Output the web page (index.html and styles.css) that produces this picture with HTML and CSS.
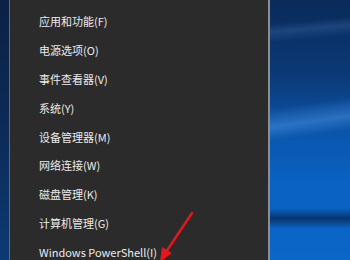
FILE: index.html
```html
<!DOCTYPE html>
<html lang="zh-CN">
<head>
  <meta charset="UTF-8" />
  <meta name="viewport" content="width=device-width, initial-scale=1.0"/>
  <title>快速链接菜单</title>
  <link rel="stylesheet" href="styles.css">
</head>
<body>
  <div class="screen">
    <div class="desk-left"></div>

    <ul class="menu">
      <li>应用和功能(F)</li>
      <li>电源选项(O)</li>
      <li>事件查看器(V)</li>
      <li>系统(Y)</li>
      <li>设备管理器(M)</li>
      <li>网络连接(W)</li>
      <li>磁盘管理(K)</li>
      <li>计算机管理(G)</li>
      <li>Windows PowerShell(I)</li>
    </ul>

    <div class="desk-right"></div>

    <!-- red pointer drawn over the screenshot -->
    <svg class="pointer" width="350" height="260" viewBox="0 0 350 260">
      <line x1="192" y1="213" x2="166" y2="252" stroke="#e8161a" stroke-width="2.4" stroke-linecap="round"/>
      <polygon points="160,262 162,247 172,253" fill="#e8161a"/>
    </svg>
  </div>
</body>
</html>
```

FILE: styles.css
```css
body {
  margin: 0;
  background: #2b2b2b;
  font-family: "Segoe UI", "Noto Sans CJK SC", "Noto Sans", sans-serif;
}
.screen {
  position: relative;
  display: flex;
  width: 350px;
  height: 260px;
  overflow: hidden;
}
.desk-left {
  width: 9px;
  background: linear-gradient(180deg, #0b2146 0%, #0c2b58 50%, #0d3a74 100%);
  border-right: 1px solid #5d6b80;
}
.menu {
  list-style: none;
  margin: 0;
  padding: 7px 0 0 29px;
  width: 229px;
  background: #2b2b2b;
  border-right: 2px solid #8a8d92;
}
.menu li {
  height: 28.9px;
  line-height: 29px;
  font-size: 11px;
  color: #ececec;
  white-space: nowrap;
}
.desk-right {
  flex: 1;
  background:
    linear-gradient(172deg, transparent 0%, transparent 40%, rgba(70,140,220,0.55) 47%, transparent 52%, transparent 100%),
    linear-gradient(175deg, transparent 0%, transparent 9%, rgba(60,110,170,0.35) 12%, transparent 16%, transparent 100%),
    linear-gradient(180deg, transparent 0%, transparent 80%, rgba(8,40,90,0.8) 84%, transparent 88%),
    linear-gradient(180deg, #0a2a5a 0%, #0b3a78 30%, #0a55ab 50%, #0a62c2 70%, #0a66c8 100%);
}
.pointer {
  position: absolute;
  left: 0;
  top: 0;
}
```
